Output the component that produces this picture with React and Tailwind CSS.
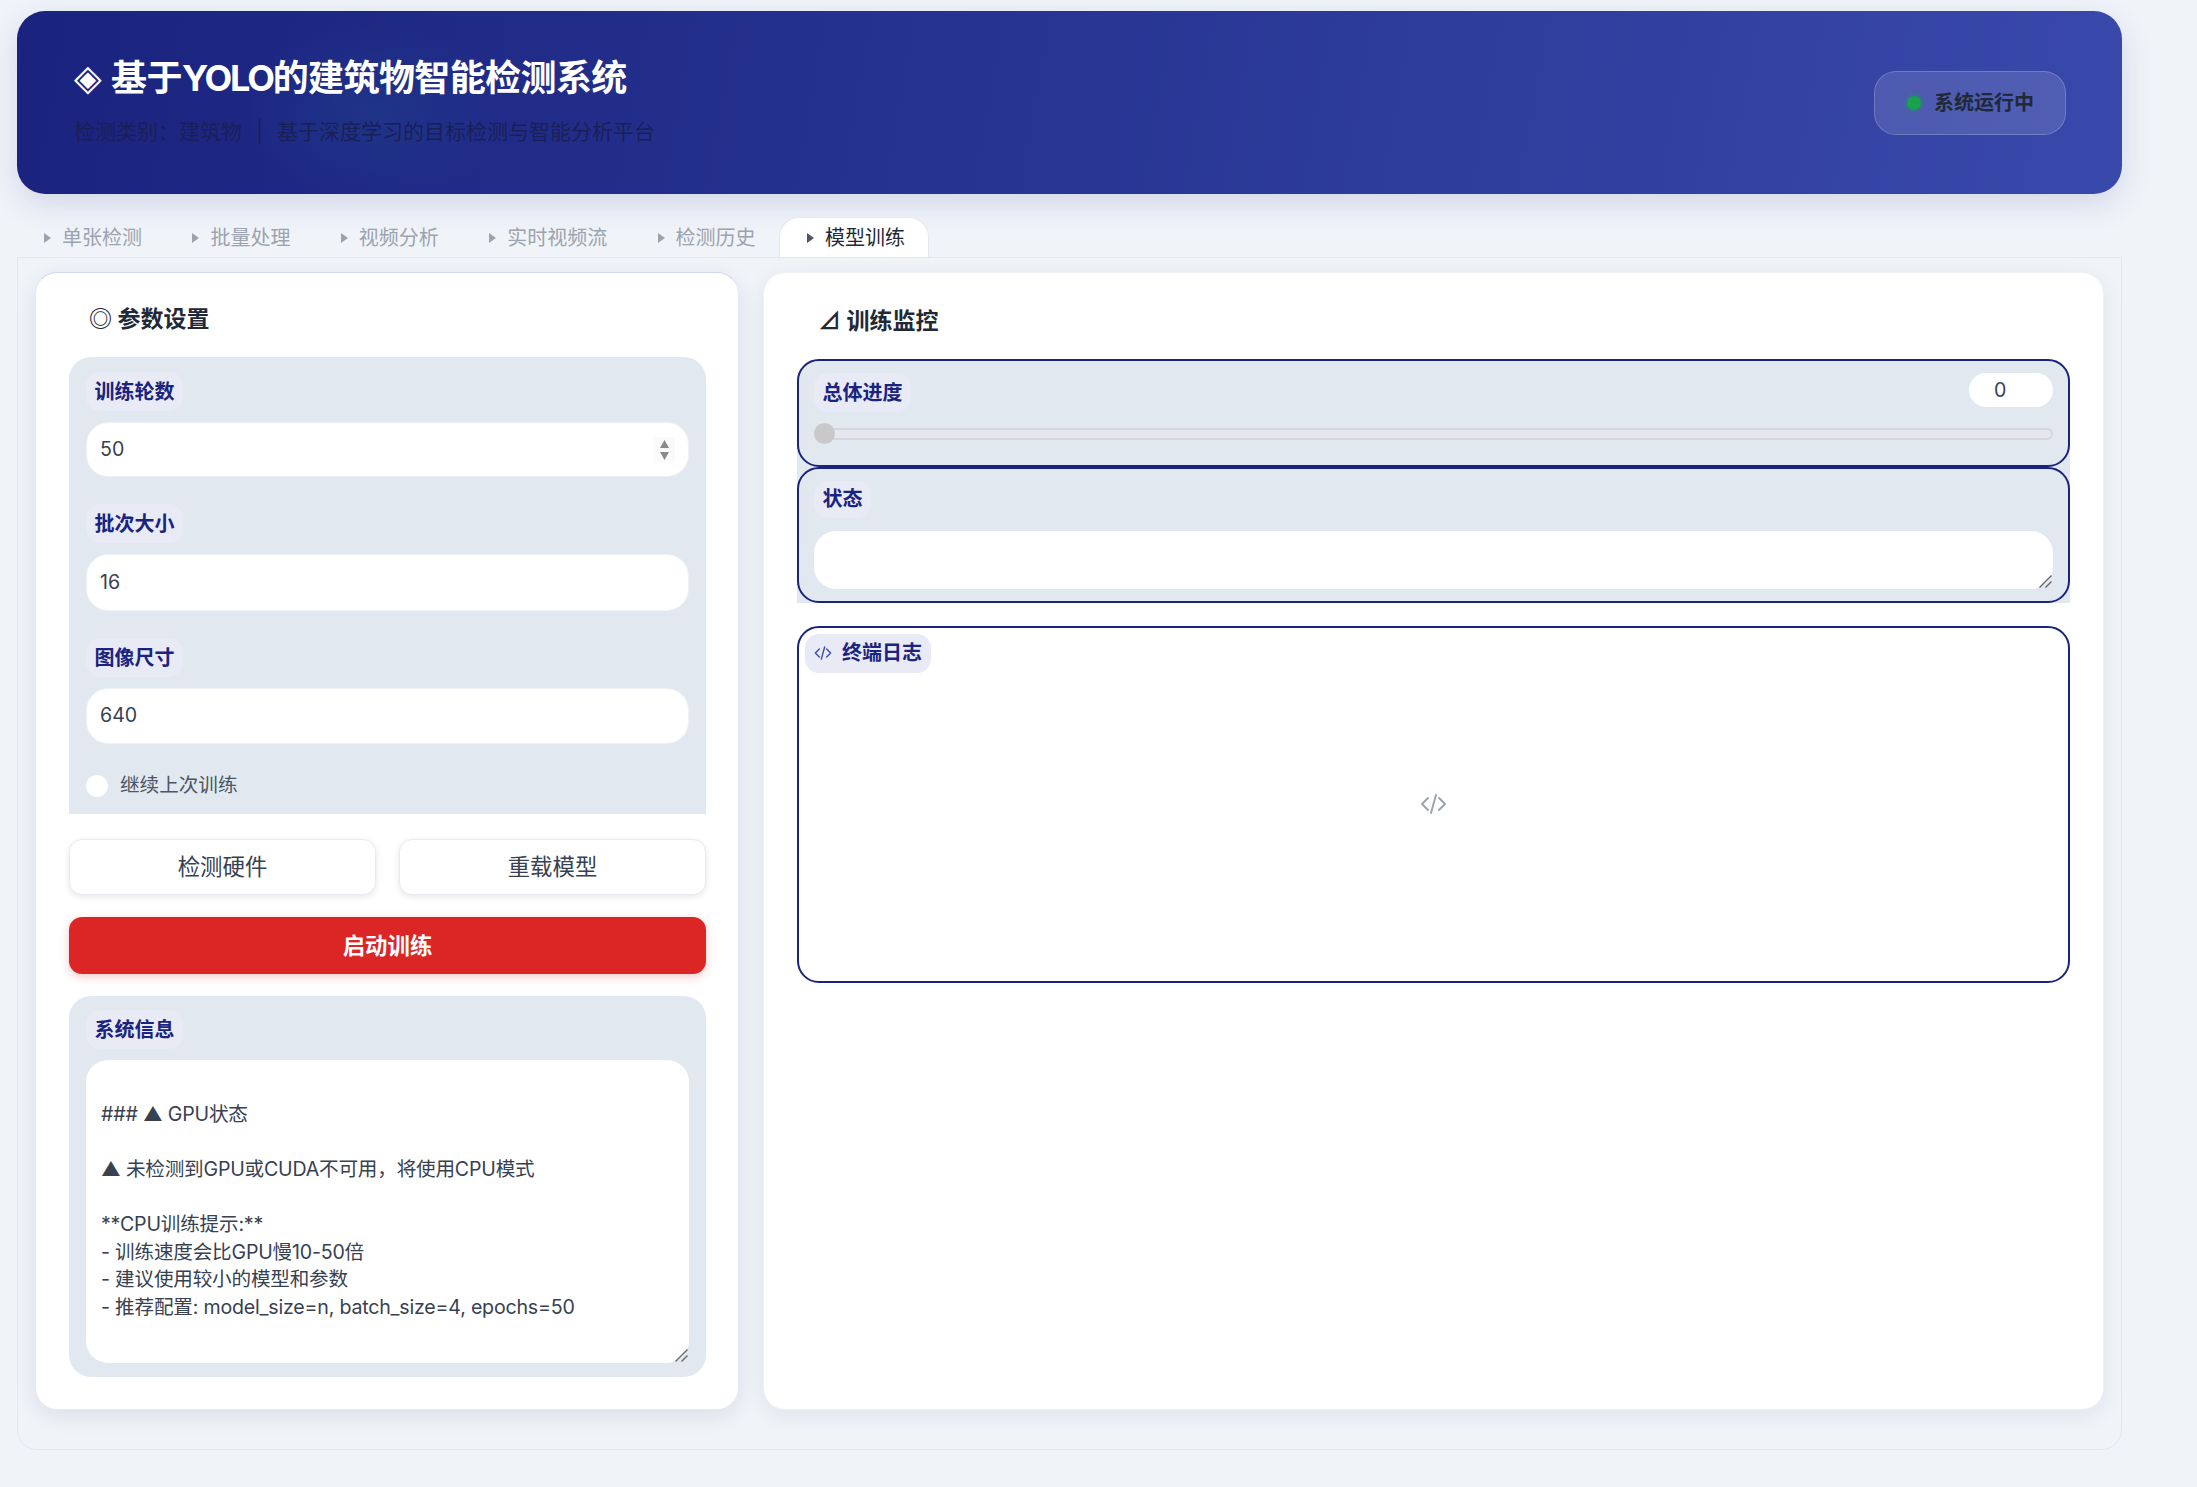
const FONT = "font-['Inter','Noto_Sans_CJK_SC',sans-serif]";

function Chip({ children, h = "h-[39px]" }) {
  return (
    <div className={`flex w-fit items-center rounded-[14px] bg-[#e8eaf6] px-[8.5px] text-[20px] font-bold leading-none text-[#1a237e] ${h}`}>
      {children}
    </div>
  );
}

function Tab({ label, active }) {
  return (
    <div className={`flex h-[41px] items-center pl-[27px] pr-[23.4px] text-[20px] ${active ? "rounded-t-[20px] border border-b-0 border-[#e2e8f0] bg-white text-[#1f2937]" : "text-[#9ca3af]"}`}>
      <span className={`mr-[11px] h-0 w-0 border-y-[5px] border-l-[7px] border-y-transparent ${active ? "border-l-[#4b5563]" : "border-l-[#9ca3af]"}`} />
      {label}
    </div>
  );
}

function Grip() {
  return (
    <svg width="13" height="13" viewBox="0 0 13 13" fill="none" stroke="#6b6b6b" strokeWidth="1.4" className="pointer-events-none absolute bottom-[1px] right-[1px]">
      <path d="M0.5 12.5 12.5 0.5" />
      <path d="M6.5 12.5 12.5 6.5" />
    </svg>
  );
}

function Field({ label, value, spinner, inputClass, className = "" }) {
  return (
    <div className={className}>
      <Chip>{label}</Chip>
      <div className={`mt-[11px] flex items-center rounded-[22px] border border-[#eef1f6] bg-white pl-[13px] pr-[13px] ${inputClass}`}>
        <input readOnly value={value} className="min-w-0 flex-1 bg-transparent text-[19.6px] text-[#374151] outline-none" />
        {spinner && (
          <span className="flex h-[26px] w-[21px] flex-col items-center justify-center gap-[4px] bg-[#fafafa]">
            <svg width="9" height="8" viewBox="0 0 9 8"><path d="M4.5 0 9 8H0z" fill="#8a8a8a" /></svg>
            <svg width="9" height="8" viewBox="0 0 9 8"><path d="M4.5 8 9 0H0z" fill="#8a8a8a" /></svg>
          </span>
        )}
      </div>
    </div>
  );
}

const SYS = `
### ▲ GPU状态

▲ 未检测到GPU或CUDA不可用，将使用CPU模式

**CPU训练提示:**
- 训练速度会比GPU慢10-50倍
- 建议使用较小的模型和参数
- 推荐配置: model_size=n, batch_size=4, epochs=50
`;

function CodeIcon({ w, h, color, sw }) {
  return (
    <svg width={w} height={h} viewBox="0 0 27 20" fill="none" stroke={color} strokeWidth={sw} strokeLinecap="round" strokeLinejoin="round">
      <path d="M8 4 2 10l6 6" />
      <path d="m19 4 6 6-6 6" />
      <path d="M16 1 11 19" />
    </svg>
  );
}

export default function App() {
  return (
    <div className={`min-h-screen w-full bg-[#f0f4f9] pb-[37px] pl-[17px] pt-[11px] ${FONT}`}>
      <div className="w-[2105px]">
        {/* Header */}
        <header className="flex h-[183px] items-center justify-between rounded-[28px] bg-[radial-gradient(ellipse_130px_90px_at_17%_55%,rgba(30,70,140,0.35),transparent),linear-gradient(100deg,#1a237e_0%,#283593_50%,#3949ab_100%)] pl-[57px] pr-[56px] shadow-[0_10px_32px_rgba(26,35,126,0.14)]">
          <div className="-mt-[5px]">
            <h1 className="flex items-center text-[36px] font-bold leading-[50px] tracking-[-0.6px] text-white">
              <span className="mr-[10px] font-['DejaVu_Sans'] text-[36px] font-normal leading-none">◈</span>
              <span>基于<span className="tracking-[-2.2px]">YOLO</span>的建筑物智能检测系统</span>
            </h1>
            <p className="mt-[14px] text-[21px] leading-[30px] text-[#192058]">检测类别：建筑物<span className="mx-[14px]">|</span>基于深度学习的目标检测与智能分析平台</p>
          </div>
          <div className="flex h-[64px] w-[192px] items-center rounded-[22px] border border-white/20 bg-white/[0.12] pl-[32px]">
            <span className="h-[14px] w-[14px] rounded-full bg-[#16a34a] shadow-[0_0_0_3px_rgba(22,163,74,0.2)]" />
            <span className="ml-[13px] text-[20px] font-bold text-[#1f2937]">系统运行中</span>
          </div>
        </header>

        {/* Tabs */}
        <nav className="mt-[23px] flex">
          <Tab label="单张检测" />
          <Tab label="批量处理" />
          <Tab label="视频分析" />
          <Tab label="实时视频流" />
          <Tab label="检测历史" />
          <Tab label="模型训练" active />
        </nav>

        {/* Content */}
        <main className="relative -mt-px flex h-[1193px] gap-[24px] rounded-b-[20px] border border-[#e2e8f0] pl-[17px] pt-[14px]">
          {/* Left */}
          <section className="h-[1138px] w-[704px] rounded-[22px] border border-[#e5e9f2] border-t-[#cfd5ee] bg-white pl-[33px] pr-[32px] pt-[31px] shadow-[0_6px_22px_rgba(15,23,42,0.09)]">
            <h2 className="flex h-[31px] items-center pl-[20px] text-[23px] font-bold text-[#1f2937]">◎ 参数设置</h2>
            <div className="mt-[22px] rounded-t-[22px] bg-[#e2e8f0] px-[17px] pb-[17px] pt-[15px]">
              <Field label="训练轮数" value="50" spinner inputClass="h-[55px]" />
              <Field label="批次大小" value="16" inputClass="h-[57px]" className="mt-[27px]" />
              <Field label="图像尺寸" value="640" inputClass="h-[56px]" className="mt-[27px]" />
              <label className="mt-[31px] flex h-[22px] items-center text-[19.6px] text-[#4b5563]">
                <span className="h-[22px] w-[22px] rounded-full bg-white" />
                <span className="ml-[12px]">继续上次训练</span>
              </label>
            </div>
            <div className="mt-[25px] flex gap-[23px]">
              <button className="h-[56px] flex-1 rounded-[13px] border border-[#e8ebf1] bg-white text-[22.4px] text-[#374151] shadow-[0_2px_6px_rgba(15,23,42,0.1)]">检测硬件</button>
              <button className="h-[56px] flex-1 rounded-[13px] border border-[#e8ebf1] bg-white text-[22.4px] text-[#374151] shadow-[0_2px_6px_rgba(15,23,42,0.1)]">重载模型</button>
            </div>
            <button className="mt-[22px] h-[57px] w-full rounded-[13px] bg-[#dc2626] text-[22.4px] font-bold text-white shadow-[0_3px_10px_rgba(220,38,38,0.25)]">启动训练</button>
            <div className="mt-[22px] rounded-[22px] bg-[#e2e8f0] px-[17px] py-[14px]">
              <Chip>系统信息</Chip>
              <div className="relative mt-[11px]">
                <textarea readOnly defaultValue={SYS} className="block h-[303px] w-full resize-none rounded-[22px] bg-white px-[15px] py-[14px] text-[19.6px] leading-[27.44px] tracking-[-0.2px] text-[#374151] outline-none" />
                <Grip />
              </div>
            </div>
          </section>

          {/* Right */}
          <section className="h-[1138px] w-[1341px] rounded-[22px] border border-[#eef1f6] bg-white px-[33px] pt-[33px] shadow-[0_6px_22px_rgba(15,23,42,0.07)]">
            <h2 className="flex h-[31px] items-center pl-[21px] text-[23px] font-bold text-[#1f2937]">⊿ 训练监控</h2>
            <div className="mt-[22px] rounded-t-[22px] bg-[#e2e8f0]">
              <div className="rounded-[22px] border-2 border-[#1a237e] px-[15px] pb-[20.7px] pt-[12px]">
                <div className="flex items-start justify-between">
                  <Chip>总体进度</Chip>
                  <input readOnly value="0" className="h-[34px] w-[84px] rounded-full bg-white pl-[25px] text-[19.6px] text-[#374151] outline-none" />
                </div>
                <div className="relative mt-[11px] flex h-[21px] items-center">
                  <div className="h-[12px] w-full rounded-full border-2 border-[#d3d6df] bg-[#e5e7ef]" />
                  <div className="absolute left-0 top-0 h-[21px] w-[21px] rounded-full bg-[#c9c9c9]" />
                </div>
              </div>
              <div className="rounded-[22px] border-2 border-[#1a237e] px-[15px] pb-[12px] pt-[12px]">
                <Chip h="h-[37px]">状态</Chip>
                <div className="relative mt-[13px]">
                  <textarea readOnly className="block h-[58px] w-full resize-none rounded-[22px] bg-white px-[15px] py-[14px] text-[19.6px] outline-none" />
                  <Grip />
                </div>
              </div>
            </div>
            <div className="relative mt-[23px] flex h-[357px] items-center justify-center rounded-[22px] border-2 border-[#1a237e]">
              <div className="absolute left-[6px] top-[6px] flex h-[39px] items-center rounded-[14px] bg-[#e8eaf6] pl-[9px] pr-[9px] text-[20px] font-bold text-[#1a237e]">
                <CodeIcon w={18} h={14} color="#3949ab" sw={2} />
                <span className="ml-[10px]">终端日志</span>
              </div>
              <CodeIcon w={27} h={20} color="#9ca3af" sw={2} />
            </div>
          </section>
        </main>
      </div>
    </div>
  );
}
